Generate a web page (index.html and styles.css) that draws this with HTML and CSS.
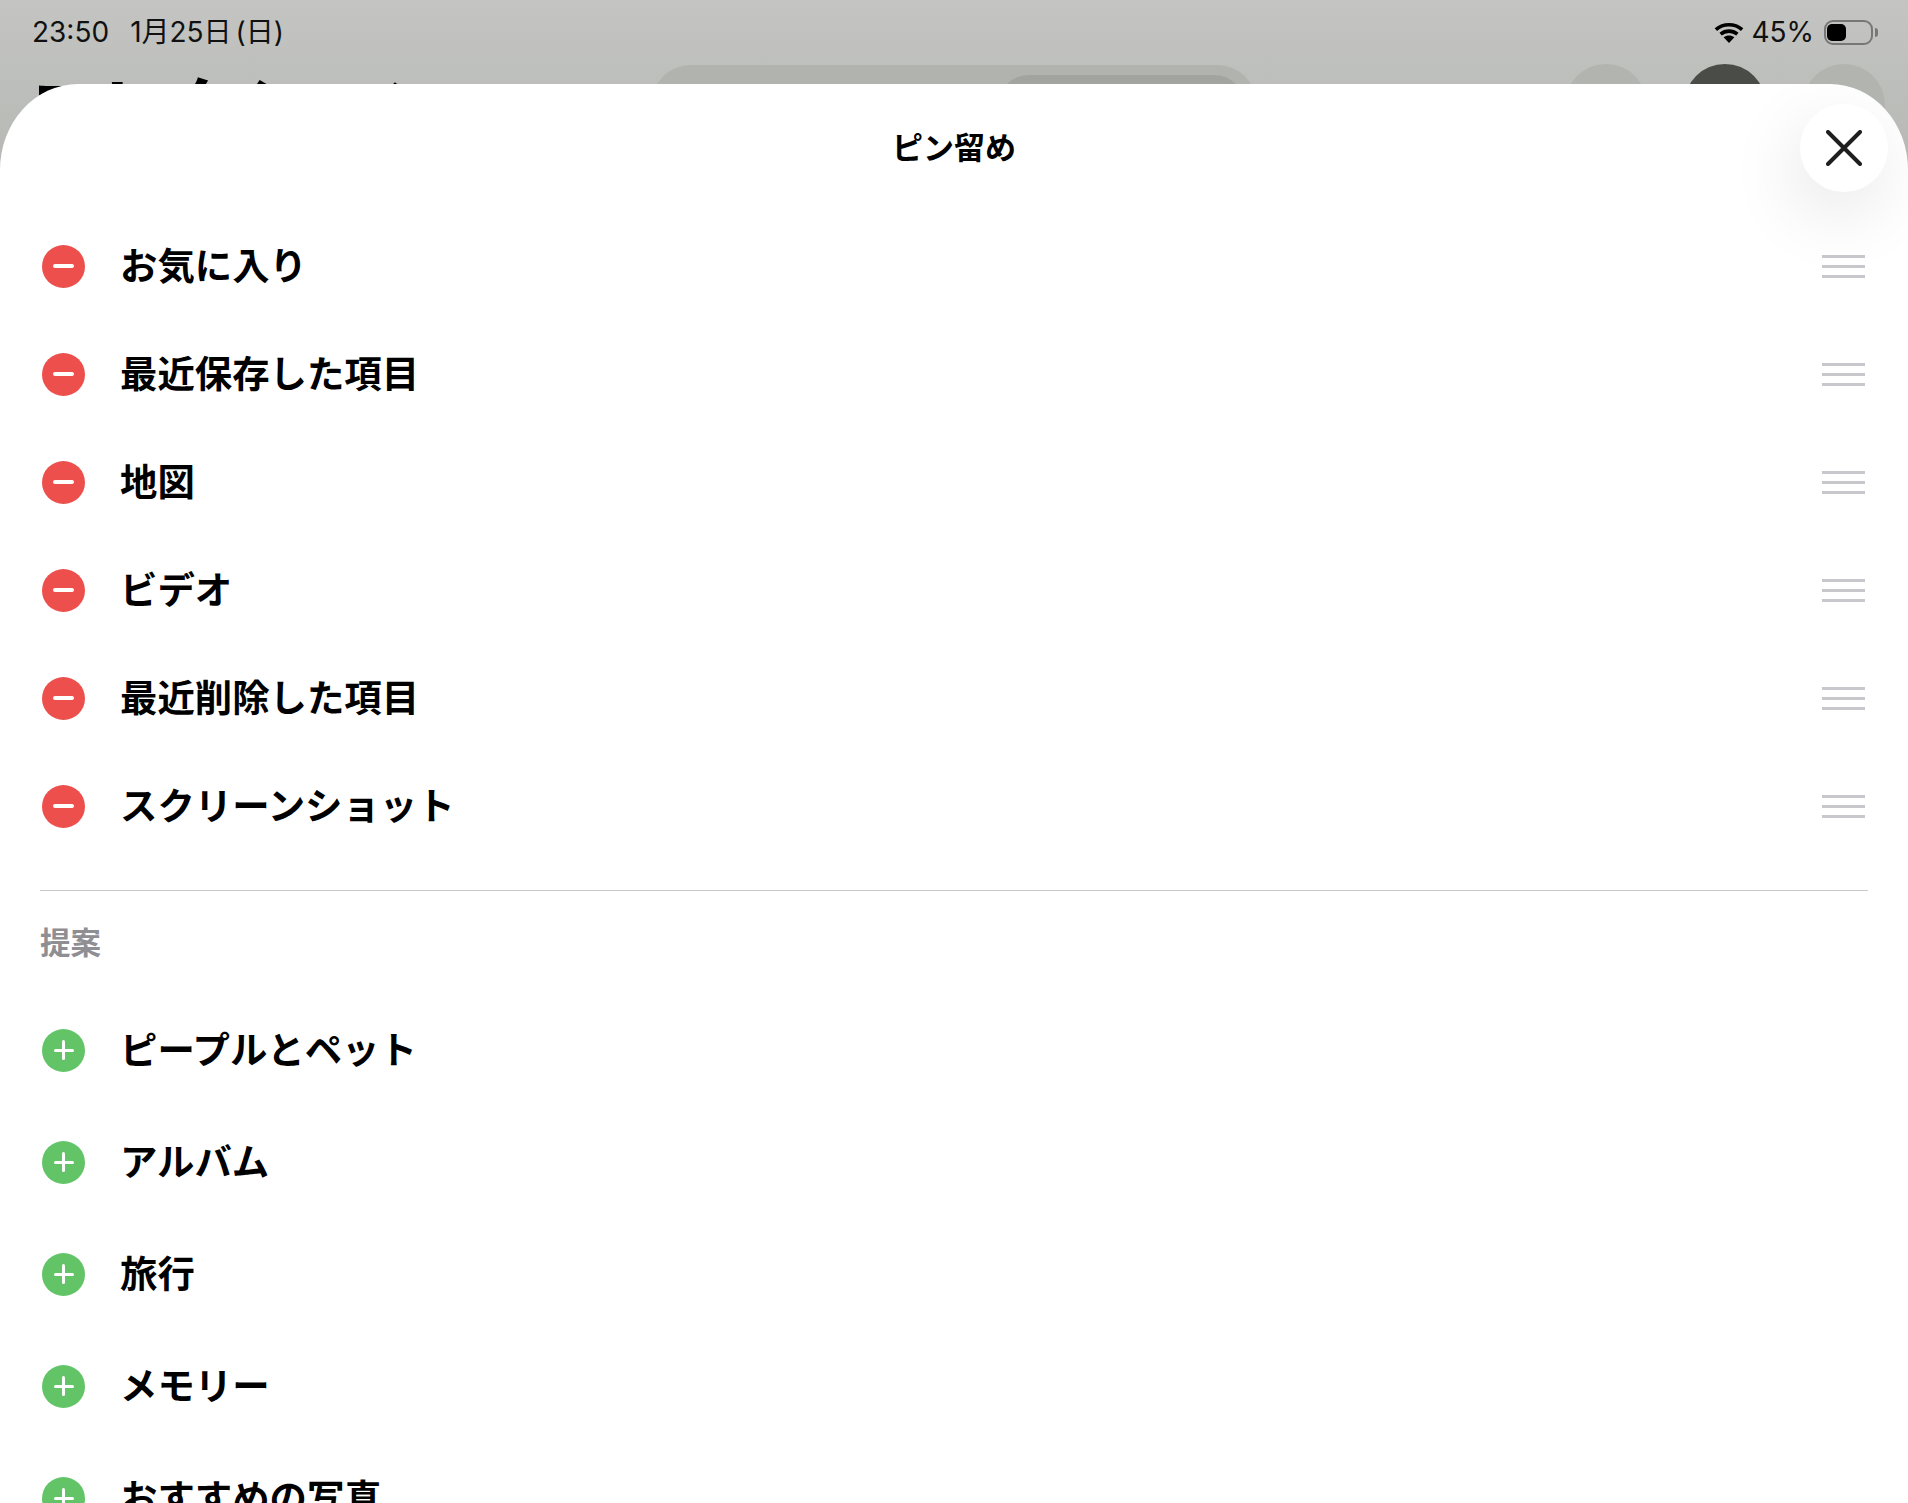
FILE: index.html
```html
<!DOCTYPE html>
<html lang="ja">
<head>
<meta charset="utf-8">
<title>ピン留め</title>
<link rel="stylesheet" href="styles.css">
</head>
<body>
<div class="screen">
  <header class="status">
    <div class="status-left"><span>23:50</span><span>1月25日<span class="thin"> </span>(日)</span></div>
    <div class="status-right">
      <svg class="wifi" viewBox="0 0 28 20" aria-hidden="true">
        <path class="arc" d="M1.5 7.2C8.6 1 19.4 1 26.5 7.2"/>
        <path class="arc" d="M6 11.6C10.6 7.7 17.4 7.7 22 11.6"/>
        <path class="wedge" d="M14 20L8.9 14.6C11.8 12.4 16.2 12.4 19.1 14.6Z"/>
      </svg>
      <span>45%</span>
      <div class="battery"><div class="battery-level"></div></div>
      <div class="battery-tip"></div>
    </div>
  </header>
  <div class="behind">
    <h1 class="behind-title">コレクション</h1>
    <div class="pill"><div class="pill-active"></div></div>
    <div class="behind-actions">
      <div class="round"></div>
      <div class="round dark"></div>
      <div class="round"></div>
    </div>
  </div>

  <section class="sheet">
    <header class="sheet-head">
      <h2 class="sheet-title">ピン留め</h2>
      <button class="close" aria-label="閉じる">
        <svg viewBox="0 0 36 36" aria-hidden="true"><path d="M2 2L34 34M34 2L2 34"/></svg>
      </button>
    </header>
    <ul class="list">
      <li class="row"><span class="badge minus"></span><span class="label">お気に入り</span><span class="handle"><i></i><i></i><i></i></span></li>
      <li class="row"><span class="badge minus"></span><span class="label">最近保存した項目</span><span class="handle"><i></i><i></i><i></i></span></li>
      <li class="row"><span class="badge minus"></span><span class="label">地図</span><span class="handle"><i></i><i></i><i></i></span></li>
      <li class="row"><span class="badge minus"></span><span class="label">ビデオ</span><span class="handle"><i></i><i></i><i></i></span></li>
      <li class="row"><span class="badge minus"></span><span class="label">最近削除した項目</span><span class="handle"><i></i><i></i><i></i></span></li>
      <li class="row"><span class="badge minus"></span><span class="label">スクリーンショット</span><span class="handle"><i></i><i></i><i></i></span></li>
    </ul>
    <hr class="divider">
    <h3 class="section-label">提案</h3>
    <ul class="list">
      <li class="row add"><span class="badge plus"></span><span class="label">ピープルとペット</span></li>
      <li class="row add"><span class="badge plus"></span><span class="label">アルバム</span></li>
      <li class="row add"><span class="badge plus"></span><span class="label">旅行</span></li>
      <li class="row add"><span class="badge plus"></span><span class="label">メモリー</span></li>
      <li class="row add"><span class="badge plus"></span><span class="label">おすすめの写真</span></li>
    </ul>
  </section>
</div>
</body>
</html>
```
FILE: styles.css
```css
* { box-sizing: border-box; }
html, body { margin: 0; padding: 0; background: #fff; }
body { font-family: Inter, "Noto Sans CJK JP", sans-serif; color: #000; }
ul { list-style: none; margin: 0; padding: 0; }
h1, h2, h3 { margin: 0; }

.screen {
  position: relative;
  height: 1503px;
  overflow: hidden;
  background: linear-gradient(180deg, #c4c5c2 0, #b6b8b4 170px);
}

.status {
  height: 64px;
  padding: 0 30px 0 32px;
  display: flex;
  justify-content: space-between;
  align-items: center;
  font-size: 28px;
  line-height: 1;
  color: #111;
}
.status-left { display: flex; gap: 21px; }
.thin { font-size: 14px; }
.status-right { display: flex; align-items: center; }
.wifi { width: 30px; height: 21px; margin-right: 7px; }
.wifi .arc { fill: none; stroke: #000; stroke-width: 3.4; }
.wifi .wedge { fill: #000; }
.battery {
  width: 49px;
  height: 25px;
  margin-left: 10px;
  padding: 2px 1px;
  border: 2px solid #777875;
  border-radius: 9px;
}
.battery-level { width: 19px; height: 100%; background: #000; border-radius: 5px; }
.battery-tip {
  width: 3px;
  height: 9px;
  margin-left: 2px;
  background: #777875;
  border-radius: 0 3px 3px 0;
}

.behind {
  display: flex;
  align-items: flex-start;
  padding-left: 28px;
  height: 120px;
}
.behind-title {
  width: 623px;
  font-size: 70px;
  line-height: 1;
  font-weight: 700;
  font-family: "Noto Sans CJK JP", sans-serif;
  margin-top: 7px;
  white-space: nowrap;
  overflow: hidden;
}
.pill {
  width: 606px;
  height: 80px;
  margin-top: 1px;
  padding: 10px 12px 0 0;
  display: flex;
  justify-content: flex-end;
  background: #b1b3af;
  border-radius: 40px;
}
.pill-active { width: 247px; height: 62px; background: #a2a49f; border-radius: 31px; }
.behind-actions { display: flex; gap: 37px; margin-left: 308px; }
.round { width: 82px; height: 82px; border-radius: 50%; background: #b2b4b0; }
.round.dark { background: #4a4c47; }

.sheet {
  position: absolute;
  top: 84px;
  left: 0;
  right: 0;
  bottom: 0;
  overflow: hidden;
  background: #fff;
  border-radius: 78px 78px 0 0 / 86px 86px 0 0;
}
.sheet-head {
  height: 128px;
  display: flex;
  align-items: center;
  justify-content: center;
}
.sheet-title {
  font-family: "Noto Sans CJK JP", sans-serif;
  font-size: 31px;
  line-height: 1;
  font-weight: 700;
  margin-top: -6px;
}
.close {
  position: absolute;
  top: 20px;
  right: 20px;
  width: 88px;
  height: 88px;
  padding: 0;
  border: 0;
  border-radius: 50%;
  display: flex;
  align-items: center;
  justify-content: center;
  background: #fff;
  box-shadow: -6px 22px 70px rgba(0, 0, 0, 0.1);
}
.close svg { width: 36px; height: 36px; }
.close path { fill: none; stroke: #1f1f1f; stroke-width: 4; stroke-linecap: round; }

.row {
  height: 108px;
  padding: 0 43px 0 42px;
  display: flex;
  align-items: center;
  gap: 35px;
}
.row.add { height: 112px; }
.label {
  flex: 1;
  font-family: "Noto Sans CJK JP", sans-serif;
  font-size: 37.4px;
  line-height: 1;
  font-weight: 700;
  color: #000;
  margin-top: -2px;
}
.badge {
  position: relative;
  flex: none;
  width: 43px;
  height: 43px;
  border-radius: 50%;
}
.badge::before, .plus::after {
  content: "";
  position: absolute;
  background: #fff;
  border-radius: 2px;
}
.minus { background: #ec4f4c; }
.minus::before { left: 11px; right: 11px; top: 19.5px; height: 4px; }
.plus { background: #62c466; }
.plus::before { left: 11.5px; right: 11.5px; top: 20px; height: 3px; }
.plus::after { top: 11.5px; bottom: 11.5px; left: 20px; width: 3px; }
.handle {
  flex: none;
  width: 43px;
  display: flex;
  flex-direction: column;
  gap: 7px;
}
.handle i { display: block; height: 3px; background: #c7c7cc; }

.divider {
  height: 1px;
  margin: 30px 40px 0;
  border: 0;
  background: #c9c9cc;
}
.section-label {
  height: 103px;
  padding: 0 0 2px 40px;
  display: flex;
  align-items: center;
  font-family: "Noto Sans CJK JP", sans-serif;
  font-size: 30.5px;
  line-height: 1;
  font-weight: 700;
  color: #8e8e93;
}
```
